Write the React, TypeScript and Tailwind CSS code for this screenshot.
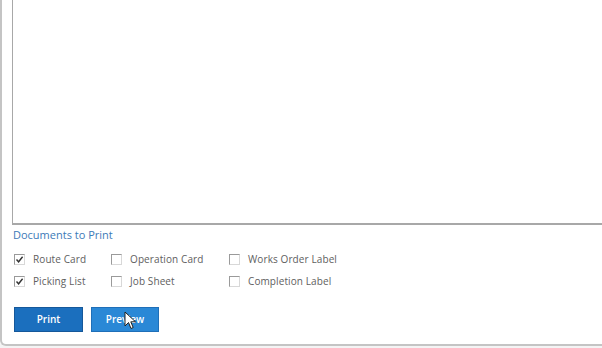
import React from "react";

function Box({ checked }: { checked?: boolean }) {
  return (
    <span className="w-[11px] h-[11px] border border-[#9a9a9a] border-r-[#d8d8d8] border-b-[#d8d8d8] bg-white flex items-center justify-center">
      {checked && (
        <svg width="9" height="9" viewBox="0 0 9 9">
          <path d="M1.5 4.5 L3.6 6.8 L7.6 1.8" fill="none" stroke="#333" strokeWidth="1.4" />
        </svg>
      )}
    </span>
  );
}

function Item({ label, checked, w }: { label: string; checked?: boolean; w: string }) {
  return (
    <div className={`flex items-center gap-[8px] h-[15px] ${w}`}>
      <Box checked={checked} />
      <span className="text-[10px] text-[#606060] tracking-[0.1px]">{label}</span>
    </div>
  );
}

export default function App() {
  return (
    <div className="w-[602px] h-[348px] bg-[#f4f4f4] overflow-hidden" style={{ fontFamily: "'Open Sans', 'Liberation Sans', sans-serif" }}>
      <div className="h-[346px] bg-white border-l-2 border-b-2 border-[#c4c4c4] rounded-bl-[6px] pl-[10px] flex flex-col">
        <div className="h-[225px] border-l border-b-2 border-[#a8a8a8] bg-white shrink-0" />
        <div className="text-[11px] text-[#3d7ab8] mt-[3px] pl-[1px] leading-[14px]">Documents to Print</div>
        <div className="flex flex-col gap-[7px] mt-[10px] pl-[2px]">
          <div className="flex">
            <Item w="w-[97px]" label="Route Card" checked />
            <Item w="w-[118px]" label="Operation Card" />
            <Item w="w-[120px]" label="Works Order Label" />
          </div>
          <div className="flex">
            <Item w="w-[97px]" label="Picking List" checked />
            <Item w="w-[118px]" label="Job Sheet" />
            <Item w="w-[120px]" label="Completion Label" />
          </div>
        </div>
        <div className="flex items-start gap-[8px] mt-[18px] pl-[2px]">
          <button className="w-[69px] h-[25px] bg-[#1b6fbe] border border-[#15589a] text-white text-[10px] font-semibold">Print</button>
          <div className="relative flex">
            <button className="w-[68px] h-[25px] bg-[#2a88d6] border border-[#1f6fb8] text-white text-[10px] font-semibold">Preview</button>
            <svg className="absolute left-[33px] top-[4px]" width="14" height="20" viewBox="0 0 14 20">
              <path d="M1 1 L1 15 L4.5 11.5 L7 17.5 L9.2 16.5 L6.8 10.8 L11.5 10.8 Z" fill="#fff" stroke="#222" strokeWidth="1" strokeLinejoin="round" />
            </svg>
          </div>
        </div>
      </div>
    </div>
  );
}
